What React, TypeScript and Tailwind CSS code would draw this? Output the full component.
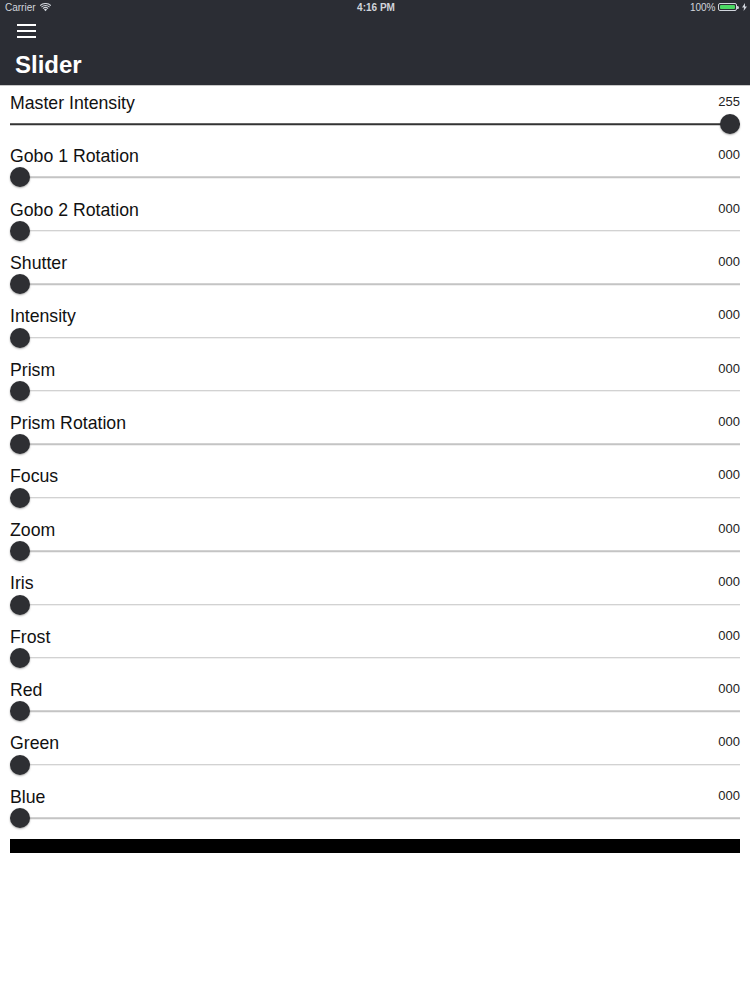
import React from 'react';

interface Channel {
  label: string;
  value: number;
}

const channels: Channel[] = [
  { label: 'Master Intensity', value: 255 },
  { label: 'Gobo 1 Rotation', value: 0 },
  { label: 'Gobo 2 Rotation', value: 0 },
  { label: 'Shutter', value: 0 },
  { label: 'Intensity', value: 0 },
  { label: 'Prism', value: 0 },
  { label: 'Prism Rotation', value: 0 },
  { label: 'Focus', value: 0 },
  { label: 'Zoom', value: 0 },
  { label: 'Iris', value: 0 },
  { label: 'Frost', value: 0 },
  { label: 'Red', value: 0 },
  { label: 'Green', value: 0 },
  { label: 'Blue', value: 0 },
];

const pad = (n: number) => n.toString().padStart(3, '0');

const StatusBar: React.FC = () => (
  <div className="h-[14px] flex items-center justify-between pl-[5px] pr-[3px] text-[10px] text-gray-300">
    <div className="flex items-center gap-1 w-24">
      <span>Carrier</span>
      <svg width="11" height="9" viewBox="0 0 12 9" fill="currentColor">
        <path d="M6 8.6 4.3 6.8a2.4 2.4 0 0 1 3.4 0L6 8.6zM2.8 5.3a4.6 4.6 0 0 1 6.4 0L8.4 6.1a3.5 3.5 0 0 0-4.8 0l-.8-.8zM1.2 3.7a6.9 6.9 0 0 1 9.6 0l-.8.8a5.8 5.8 0 0 0-8 0l-.8-.8zM-.3 2.1a9.1 9.1 0 0 1 12.6 0l-.8.8a8 8 0 0 0-11 0l-.8-.8z" />
      </svg>
    </div>
    <span className="font-semibold">4:16 PM</span>
    <div className="flex items-center justify-end gap-[3px] w-24">
      <span>100%</span>
      <div className="flex items-center">
        <div className="w-[19px] h-[8px] rounded-[2px] border border-gray-300 p-[1px]">
          <div className="w-full h-full bg-[#4cd964] rounded-[1px]" />
        </div>
        <div className="w-[1.5px] h-[3px] bg-gray-300 rounded-r" />
      </div>
      <svg width="5" height="8" viewBox="0 0 5 8" fill="currentColor">
        <path d="M3 0 0 4.6h2L1.6 8 5 3.4H3L3 0z" />
      </svg>
    </div>
  </div>
);

const SliderRow: React.FC<{ channel: Channel; dark: boolean }> = ({ channel, dark }) => {
  const pct = (channel.value / 255) * 100;
  return (
    <div className="h-[53.4px] pt-[7px] px-[10px]">
      <div className="h-5 flex items-center justify-between">
        <span className="text-[17.7px] text-[#111]">{channel.label}</span>
        <span className="text-[13px] text-[#222] mt-[-3px]">{pad(channel.value)}</span>
      </div>
      <div className="relative h-[22px]">
        <div
          className={`absolute left-0 right-0 top-1/2 -translate-y-1/2 h-[1.5px] ${
            dark ? 'bg-[#333]' : 'bg-[#c4c4c4]'
          }`}
        />
        <div
          className="absolute top-1/2 -translate-y-1/2 w-5 h-5 rounded-full bg-[#2e2f33] shadow-[0_1px_2px_rgba(0,0,0,0.35)]"
          style={{ left: `calc(${pct}% - ${(pct / 100) * 20}px)` }}
        />
      </div>
    </div>
  );
};

export default function App() {
  return (
    <div className="w-[750px] h-[1000px] bg-white font-['Liberation_Sans',Arial,sans-serif]">
      <header className="h-[86px] bg-[#2b2d34] border-b border-[#c8c8c8]">
        <StatusBar />
        <div className="pl-[17px] pt-[9px]">
          <svg width="20" height="15" viewBox="0 0 20 15" className="block">
            <rect x="0" y="1" width="19" height="2" fill="#fff" />
            <rect x="0" y="7" width="19" height="2" fill="#fff" />
            <rect x="0" y="13" width="19" height="2" fill="#fff" />
          </svg>
        </div>
        <h1 className="pl-[15px] mt-[13px] text-[24px] leading-7 font-bold text-white">Slider</h1>
      </header>
      <main>
        {channels.map((c, i) => (
          <SliderRow key={c.label} channel={c} dark={i === 0} />
        ))}
        <div className="mx-[10px] mt-[6px] h-[14px] bg-black" />
      </main>
    </div>
  );
}
